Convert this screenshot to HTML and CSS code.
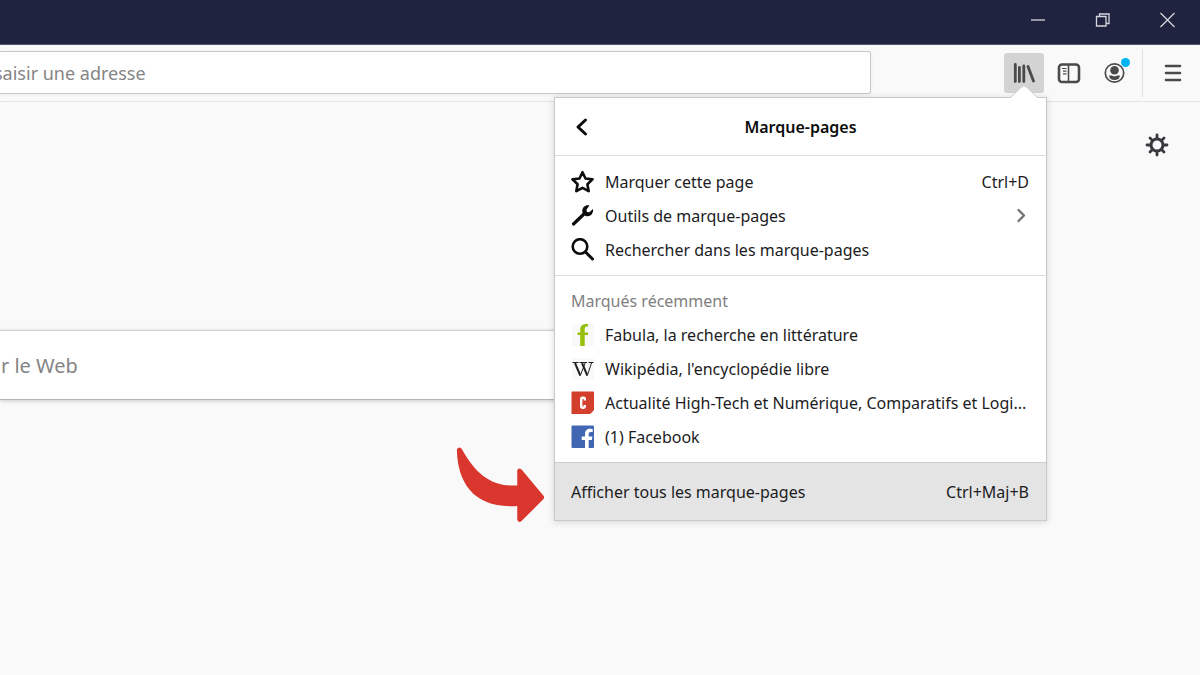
FILE: index.html
```html
<!DOCTYPE html>
<html lang="fr">
<head>
<meta charset="utf-8">
<title>Marque-pages</title>
<meta name="viewport" content="width=device-width, initial-scale=1">
<link rel="stylesheet" href="styles.css">
</head>
<body>
<header class="titlebar">
  <button class="window-button" aria-label="Réduire"><svg width="16" height="16" viewBox="0 0 16 16"><path d="M1 8h14"/></svg></button>
  <button class="window-button" aria-label="Restaurer"><svg width="16" height="16" viewBox="0 0 16 16"><path d="M1.500 4.500h9.500V14H1.500zM4.500 4.500V2H14v9.500h-3"/></svg></button>
  <button class="window-button" aria-label="Fermer"><svg width="16" height="16" viewBox="0 0 16 16"><path d="M.5 1l14 14M14.500 1L.5 15"/></svg></button>
</header>

<nav class="toolbar">
  <input class="address" type="text" aria-label="Adresse" placeholder="saisir une adresse">
  <button class="tool tool-active" aria-label="Bibliothèque">
    <svg width="24" height="24" viewBox="0 0 24 24" stroke="#4a4a4a" stroke-width="2.800" stroke-linecap="round"><path d="M3.300 3.500v17M7.400 6.500v14M11.800 5v15.500M16 5.500l5.500 14.500"/></svg>
  </button>
  <button class="tool" aria-label="Panneau latéral">
    <svg width="24" height="24" viewBox="0 0 24 24" fill="none" stroke="#4a4a4a"><rect x="2" y="3.500" width="20" height="17.500" rx="3" stroke-width="2.600"/><path d="M11.500 4v17" stroke-width="1.600"/><path d="M5 7.500h4.500M6 10.200h3.500M6 12.800h3.500" stroke-width="1.200"/></svg>
  </button>
  <button class="tool account" aria-label="Compte">
    <svg width="24" height="24" viewBox="0 0 24 24"><circle cx="12.500" cy="12" r="9.200" fill="none" stroke="#4a4a4a" stroke-width="1.700"/><circle cx="12.500" cy="9.300" r="4.300" fill="#4a4a4a"/><path d="M7 14.500h3q2.500 1.700 5 0h3q-.5 4.500-5.500 4.500t-5.500-4.500z" fill="#4a4a4a"/></svg>
    <span class="account-dot"></span>
  </button>
  <span class="separator"></span>
  <button class="tool" aria-label="Menu">
    <svg width="24" height="24" viewBox="0 0 24 24" stroke="#4a4a4a" stroke-width="2.600" stroke-linecap="round"><path d="M5 5h14M5 12h14M5 19h14"/></svg>
  </button>

  <section class="panel" aria-label="Marque-pages">
    <svg class="panel-tip" width="30" height="14" viewBox="0 0 30 14"><path d="M1 13L13 1.500Q15 0 17 1.500L29 13" fill="#fff" stroke="#c9c9c9"/><path d="M1 13h28v1H1z" fill="#fff"/></svg>
    <header class="panel-header">
      <button class="back" aria-label="Retour"><svg width="24" height="24" viewBox="0 0 24 24" fill="none" stroke="#0c0c0d" stroke-width="3" stroke-linecap="round" stroke-linejoin="round"><path d="M14.500 5L7 12l7.500 7"/></svg></button>
      <h1 class="panel-title">Marque-pages</h1>
    </header>
    <div class="group">
      <button class="row">
        <svg class="icon" width="24" height="24" viewBox="0 0 24 24" fill="none" stroke="#0c0c0d" stroke-width="2.600" stroke-linejoin="round"><path d="M11.500 2.200l3 6.300 7 .9-5.100 4.800 1.300 7-6.200-3.300-6.200 3.300 1.300-7L1.500 9.400l7-.9z"/></svg>
        <span class="label">Marquer cette page</span><span class="shortcut">Ctrl+D</span>
      </button>
      <button class="row">
        <svg class="icon" width="24" height="24" viewBox="0 0 24 24"><path d="M2.500 20L13 10" stroke="#0c0c0d" stroke-width="3.200" stroke-linecap="round"/><path d="M18.500 1.600l-3 4 .4 2.400 2.400.3L22 5.100c.6 4.200-2 7.300-5.500 7.200-2.600 0-5-2.200-5.200-5C11.200 3.500 14.500.5 18.500 1.600z" fill="#0c0c0d"/></svg>
        <span class="label">Outils de marque-pages</span>
        <svg class="chevron" width="16" height="16" viewBox="0 0 16 16" fill="none" stroke="#737373" stroke-width="2.400" stroke-linecap="round" stroke-linejoin="round"><path d="M5.500 2L11 7.500 5.500 13"/></svg>
      </button>
      <button class="row">
        <svg class="icon" width="24" height="24" viewBox="0 0 24 24" fill="none" stroke="#0c0c0d" stroke-linecap="round"><circle cx="9" cy="8.500" r="7.300" stroke-width="2.600"/><path d="M14.500 14l7 7" stroke-width="3"/></svg>
        <span class="label">Rechercher dans les marque-pages</span>
      </button>
    </div>
    <div class="group group-recent">
      <h2 class="group-title">Marqués récemment</h2>
      <button class="row">
        <svg class="icon" width="24" height="24" viewBox="0 0 24 24"><path fill="#f9f9f9" d="M1 1h22v22H1z"/><path fill="#97bf0d" d="M17 1v2.500c-2.500-.3-3.300.5-3.300 3v3H17V12h-3.300v11H9.200V12H6.500V9.500h2.700V7C9.200 2.500 11.700.5 17 1z"/></svg>
        <span class="label">Fabula, la recherche en littérature</span>
      </button>
      <button class="row">
        <svg class="icon" width="24" height="24" viewBox="0 0 24 24"><path fill="#f9f9f9" d="M1 1h22v22H1z"/><g fill="none" stroke="#222"><path d="M4 6l5.300 12.500M11 6l5.300 12.500" stroke-width="2"/><path d="M9.300 18.500L14.200 6M16.300 18.500L20.500 6M1.500 5.500h6M8.500 5.500h7.500M17.500 5.500h5" stroke-width="1"/></g></svg>
        <span class="label">Wikipédia, l'encyclopédie libre</span>
      </button>
      <button class="row">
        <svg class="icon" width="24" height="24" viewBox="0 0 24 24"><path fill="#d33f2c" d="M1 .5h21.500q.5 0 .5.500v17.500L19 23H1q-.5 0-.5-.5V1q0-.5.500-.5z"/><path d="M19.500 22.500V19H23z" fill="#d33f2c"/><path d="M13.800 9.500V8q0-1.200-1.300-1.200h-1q-1.300 0-1.300 1.200v7.500q0 1.200 1.300 1.200h1q1.300 0 1.300-1.200V14" fill="none" stroke="#fff" stroke-width="2.400"/></svg>
        <span class="label">Actualité High-Tech et Numérique, Comparatifs et Logi...</span>
      </button>
      <button class="row">
        <svg class="icon" width="24" height="24" viewBox="0 0 24 24"><rect x=".5" y=".5" width="22.500" height="22.500" rx="1" fill="#4267b2"/><path fill="#fff" d="M14 23v-8h-3.300v-3.500H14V9c0-3.500 2.200-5.200 5.200-5.200l2.500.2v3h-1.800c-1.700 0-2.200.8-2.200 2v2.500h3.700l-.5 3.500h-3.200v8z"/></svg>
        <span class="label">(1) Facebook</span>
      </button>
    </div>
    <button class="row panel-footer"><span class="label">Afficher tous les marque-pages</span><span class="shortcut">Ctrl+Maj+B</span></button>
  </section>
</nav>

<main class="page">
  <button class="settings" aria-label="Personnaliser"><svg width="24" height="24" viewBox="0 0 24 24" fill="none" stroke="#38383d" stroke-linecap="round"><circle cx="12" cy="12" r="6" stroke-width="3"/><path d="M12 2v3M12 19v3M2 12h3M19 12h3M5 5l2 2M17 17l2 2M5 19l2-2M17 7l2-2" stroke-width="2.800"/></svg></button>
  <input class="web-search" type="text" aria-label="Rechercher sur le Web" placeholder="r le Web">
  <svg class="arrow" width="90" height="78" viewBox="50 45 270 235"><path fill="#d9362e" d="M67 57Q60 47 52 58C54 165 108 237 234 229V270Q238 280 246 275L313 208Q317 203 313 198L247 119Q238 112 234 121V167C160 171 112 138 67 57Z"/></svg>
</main>
</body>
</html>
```
FILE: styles.css
```css
* { box-sizing: border-box; }

body {
  margin: 0;
  min-height: 100vh;
  overflow-x: hidden;
  background: #f9f9f9;
  color: #1c1c1e;
  font: 16px/24px "Noto Sans", "Open Sans", sans-serif;
}

button {
  margin: 0;
  padding: 0;
  border: 0;
  background: none;
  color: inherit;
  font: inherit;
}

svg { display: block; flex: none; }

input::placeholder { color: #858585; opacity: 1; }

.titlebar {
  display: flex;
  justify-content: flex-end;
  height: 45px;
  padding-bottom: 4px;
  background: #202340;
  border-bottom: 1px solid #55566b;
}

.window-button {
  display: grid;
  place-items: center;
  width: 65px;
}

.window-button svg {
  fill: none;
  stroke: #d5d5dc;
  stroke-width: 1.3;
}

.toolbar {
  position: relative;
  display: flex;
  align-items: center;
  gap: 5px;
  height: 57px;
  padding-right: 7px;
  background: #f9f9f9;
  border-bottom: 1px solid #e4e4e5;
}

.address {
  flex: 1;
  min-width: 0;
  height: 43px;
  margin: 0 128px 1px 0;
  padding: 0;
  border: 1px solid #c8c8c8;
  border-left: 0;
  border-radius: 0 3px 3px 0;
  background: #fff;
  box-shadow: 0 1px 4px #0000000d;
  font: 18px "Noto Sans", "Open Sans", sans-serif;
  text-indent: -6px;
}

.tool {
  position: relative;
  display: grid;
  place-items: center;
  width: 40px;
  height: 40px;
  border-radius: 3px;
}

.tool-active { background: #d3d3d4; }

.account-dot {
  position: absolute;
  top: 5px;
  right: 4px;
  width: 9px;
  height: 9px;
  border-radius: 50%;
  background: #00b3f4;
}

.separator {
  width: 1px;
  height: 48px;
  margin: 0 5px 0 3px;
  background: #e0e0e1;
}

.panel {
  position: absolute;
  z-index: 1;
  top: 52px;
  right: 153px;
  width: 493px;
  border: 1px solid #c9c9c9;
  background: #fff;
  box-shadow: 0 1px 7px #00000026;
}

.panel-tip {
  position: absolute;
  top: -13px;
  right: 7px;
}

.panel-header {
  display: grid;
  grid-template-columns: 24px 1fr 24px;
  align-items: center;
  height: 58px;
  padding: 0 16px;
  border-bottom: 1px solid #dedede;
}

.panel-title {
  margin: 0;
  color: #0c0c0d;
  font-size: 16px;
  font-weight: 600;
  text-align: center;
}

.group {
  padding: 9px 0 8px;
  border-bottom: 1px solid #dedede;
}

.group-recent {
  padding-top: 8px;
  border-color: #cdcdcd;
}

.group-title {
  margin: 0;
  padding: 0 16px;
  color: #808080;
  font-size: 16px;
  font-weight: 400;
  line-height: 34px;
}

.row {
  display: flex;
  align-items: center;
  gap: 10px;
  width: 100%;
  height: 34px;
  padding: 0 17px 0 16px;
  text-align: left;
}

.label {
  flex: 1;
  min-width: 0;
  white-space: nowrap;
}

.panel-footer {
  height: 57px;
  background: #e4e4e4;
}

.page { position: relative; }

.settings {
  display: block;
  margin: 0 31px 0 auto;
  padding-top: 31px;
}

.web-search {
  display: block;
  width: 70%;
  height: 70px;
  margin-top: 173px;
  padding: 0 0 0 1px;
  border: 1px solid #d0d0d0;
  border-left: 0;
  border-bottom-color: #b5b5b5;
  border-radius: 0 3px 3px 0;
  background: #fff;
  box-shadow: 0 1px 4px #00000030;
  font: 20px "Noto Sans", "Open Sans", sans-serif;
}

.arrow {
  position: absolute;
  top: 343px;
  left: 456px;
}
```
